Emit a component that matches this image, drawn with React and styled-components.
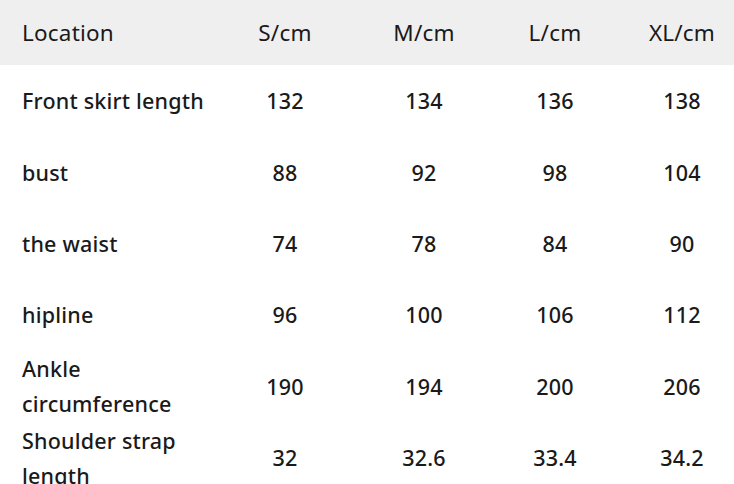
import React from 'react';
import styled, { createGlobalStyle } from 'styled-components';

const GlobalStyle = createGlobalStyle`
  html, body {
    margin: 0;
    padding: 0;
    background: #ffffff;
    overflow: hidden;
  }
  body {
    font-family: "Noto Sans", "Noto Sans CJK SC", sans-serif;
    color: #1a1a1a;
  }
`;

const sizes = ['S/cm', 'M/cm', 'L/cm', 'XL/cm'];

const rows = [
  { name: 'Front skirt length', values: ['132', '134', '136', '138'] },
  { name: 'bust', values: ['88', '92', '98', '104'] },
  { name: 'the waist', values: ['74', '78', '84', '90'] },
  { name: 'hipline', values: ['96', '100', '106', '112'] },
  { name: 'Ankle\ncircumference', values: ['190', '194', '200', '206'] },
  { name: 'Shoulder strap\nlength', values: ['32', '32.6', '33.4', '34.2'] },
];

const App = () => {
  return (
    <>
      <GlobalStyle />
      <Table>
        <Head>
          <NameCell>Location</NameCell>
          {sizes.map((s) => (
            <ValueCell key={s}>{s}</ValueCell>
          ))}
        </Head>
        {rows.map((r) => (
          <Row key={r.name}>
            <NameCell bold>{r.name}</NameCell>
            {r.values.map((v, i) => (
              <ValueCell bold key={i}>{v}</ValueCell>
            ))}
          </Row>
        ))}
      </Table>
    </>
  );
};

const Table = styled.div`
  width: 752px;
`;

const Head = styled.div`
  display: grid;
  grid-template-columns: 220px 130px 148px 114px 140px;
  align-items: center;
  height: 65px;
  background: #efefef;
  font-size: 22.5px;
  letter-spacing: 0.2px;
`;

const Row = styled.div`
  display: grid;
  grid-template-columns: 220px 130px 148px 114px 140px;
  align-items: center;
  height: 71.4px;
  font-size: 21.5px;
  letter-spacing: 0.2px;
`;

const NameCell = styled.div`
  padding-left: 22px;
  white-space: pre-line;
  line-height: 35px;
  font-weight: ${(p) => (p.bold ? 500 : 400)};
`;

const ValueCell = styled.div`
  text-align: center;
  font-weight: ${(p) => (p.bold ? 500 : 400)};
`;

export default App;
